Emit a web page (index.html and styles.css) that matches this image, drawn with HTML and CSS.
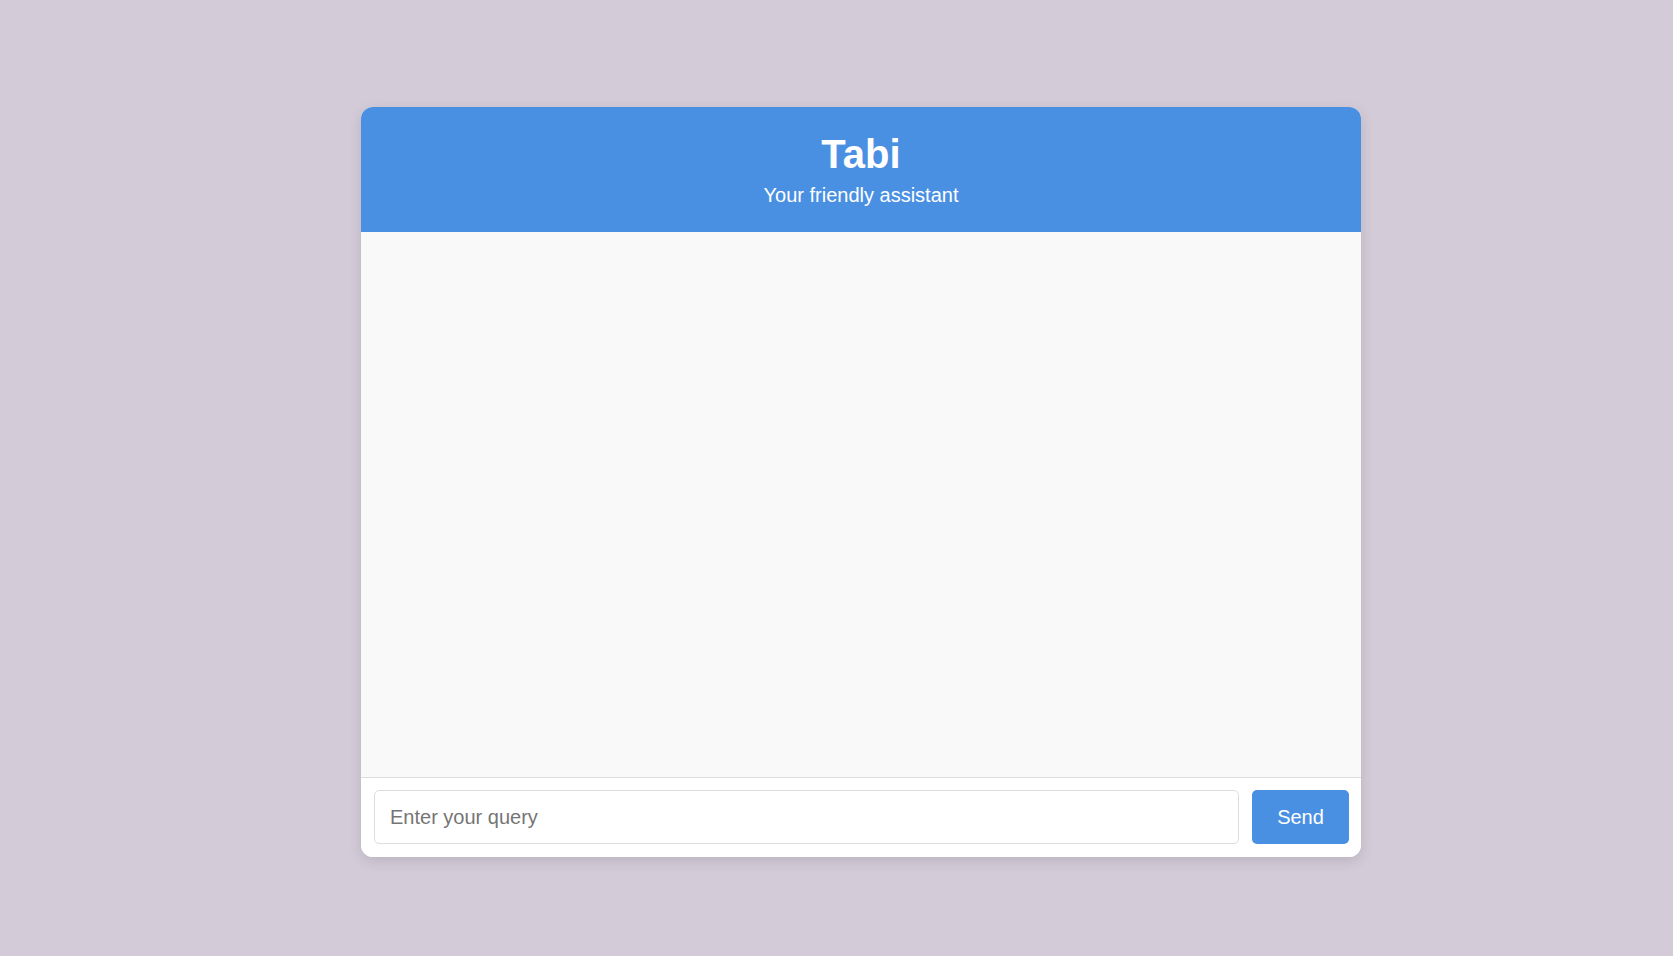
FILE: index.html
```html
<!DOCTYPE html>
<html lang="en">
<head>
<meta charset="utf-8">
<title>Tabi</title>
<link rel="stylesheet" href="styles.css">
</head>
<body>
<div class="page">
  <div class="chat">
    <header class="chat-header">
      <h1 class="title">Tabi</h1>
      <p class="subtitle">Your friendly assistant</p>
    </header>
    <main class="messages"></main>
    <form class="composer">
      <input class="query" type="text" placeholder="Enter your query">
      <button class="send" type="button">Send</button>
    </form>
  </div>
</div>
</body>
</html>
```

FILE: styles.css
```css
* { box-sizing: border-box; }
html, body { margin: 0; padding: 0; height: 100%; }
body {
  background: #d4cbd9;
  font-family: "Liberation Sans", Arial, sans-serif;
}
.page {
  padding-top: 107px;
  padding-left: 361px;
}
.chat {
  width: 1000px;
  height: 750px;
  background: #fff;
  border-radius: 12px;
  box-shadow: 0 4px 14px rgba(0, 0, 0, 0.12);
  display: flex;
  flex-direction: column;
  overflow: hidden;
}
.chat-header {
  background: #4a90e2;
  color: #fff;
  text-align: center;
  height: 125px;
  padding-top: 24px;
}
.title {
  margin: 0;
  font-size: 40px;
  line-height: 46px;
  font-weight: bold;
}
.subtitle {
  margin: 6px 0 0;
  font-size: 20px;
  line-height: 24px;
}
.messages {
  flex: 1;
  background: #f9f9f9;
}
.composer {
  margin: 0;
  display: flex;
  gap: 13px;
  padding: 12px 12px 13px 13px;
  border-top: 1px solid #ddd;
  background: #fff;
}
.query {
  flex: 1;
  height: 54px;
  border: 1px solid #ddd;
  border-radius: 5px;
  padding: 0 15px;
  font-family: "Liberation Sans", Arial, sans-serif;
  font-size: 20px;
  color: #333;
  outline: none;
}
.query::placeholder { color: #757575; }
.send {
  width: 97px;
  height: 54px;
  border: none;
  border-radius: 5px;
  background: #4a90e2;
  color: #fff;
  font-family: "Liberation Sans", Arial, sans-serif;
  font-size: 20px;
  cursor: pointer;
}
```
